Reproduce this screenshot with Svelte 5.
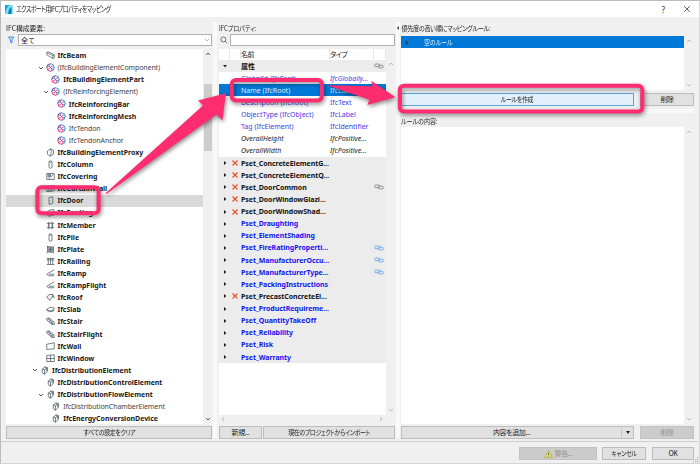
<script>
    const elements = [
        { name: "IfcBeam", icon: "beam", level: 2, bold: true },
        { name: "(IfcBuildingElementComponent)", icon: "part", level: 2, open: true },
        { name: "IfcBuildingElementPart", icon: "part", level: 3, bold: true },
        { name: "(IfcReinforcingElement)", icon: "part", level: 3, open: true },
        { name: "IfcReinforcingBar", icon: "part", level: 4, bold: true },
        { name: "IfcReinforcingMesh", icon: "part", level: 4, bold: true },
        { name: "IfcTendon", icon: "part", level: 4 },
        { name: "IfcTendonAnchor", icon: "part", level: 4 },
        { name: "IfcBuildingElementProxy", icon: "proxy", level: 2, bold: true },
        { name: "IfcColumn", icon: "column", level: 2, bold: true },
        { name: "IfcCovering", icon: "covering", level: 2, bold: true },
        { name: "IfcCurtainWall", icon: "curtain", level: 2, bold: true },
        { name: "IfcDoor", icon: "door", level: 2, bold: true },
        { name: "IfcFooting", icon: "footing", level: 2, bold: true },
        { name: "IfcMember", icon: "member", level: 2, bold: true },
        { name: "IfcPile", icon: "column", level: 2, bold: true },
        { name: "IfcPlate", icon: "plate", level: 2, bold: true },
        { name: "IfcRailing", icon: "railing", level: 2, bold: true },
        { name: "IfcRamp", icon: "ramp", level: 2, bold: true },
        { name: "IfcRampFlight", icon: "ramp", level: 2, bold: true },
        { name: "IfcRoof", icon: "roof", level: 2, bold: true },
        { name: "IfcSlab", icon: "slab", level: 2, bold: true },
        { name: "IfcStair", icon: "stair", level: 2, bold: true },
        { name: "IfcStairFlight", icon: "stair", level: 2, bold: true },
        { name: "IfcWall", icon: "wall", level: 2, bold: true },
        { name: "IfcWindow", icon: "window", level: 2, bold: true },
        { name: "IfcDistributionElement", icon: "flow", level: 1, bold: true, open: true },
        { name: "IfcDistributionControlElement", icon: "flow", level: 2, bold: true },
        { name: "IfcDistributionFlowElement", icon: "flow", level: 2, bold: true, open: true },
        { name: "IfcDistributionChamberElement", icon: "flow", level: 3 },
        { name: "IfcEnergyConversionDevice", icon: "flow", level: 3, bold: true },
    ];

    const icons = {
        beam: "M1 2l2-1 8 4v4l-2 1M1 2v3l8 5V6zM9 6l2-1",
        proxy: "M6 1L2 4v4l3 3 5-3V3zM6 1c2 3 1 7-1 10",
        column: "M4 2l2-1 2 1v8l-2 1-2-1zM4 2l2 1 2-1",
        covering: "M1 2h10v8H1zM2 3h4v3H2M2 4.500h4M6 7l4-4M3 8h3",
        curtain: "M1 3l10-1v7L1 10zM4 3v7M7 2v8M1 6l10-1",
        door: "M4 2l5-1v9l-5 1zM5.500 6v1",
        footing: "M1 6l3-3 6-1 1 3v4l-7 2-3-2zM1 6l4 1 6-2M5 7v3",
        member: "M1 3h10M1 9h10M4 1v10M8 1v10M3.200 3v6M8.800 3v6",
        plate: "M2 2l8 1v7l-8-1zM1 1l2 2M10 2l1-1M2 9l-1 2M10 10l1 1M3 4h6M3 6h6M3 8h6M4 3v6M6 3v6M8 3v6",
        railing: "M1 2h10M1 4h10M3 2v8M6 2v8M9 2v8M1 10h10",
        ramp: "M11 1L1 7l2 2h8M4 7h7",
        roof: "M1 6l3-4h5l2 4-3-1-3 5-1-2zM8 5l1-3",
        slab: "M1 6l4-3 6 1-1 3-5 1zM1 6v1l4 2 5-1V7",
        stair: "M1 2l3-1 7 6v3H8L1 4zM3 2l6 7M2 4l3-2M4 6l3-2M6 8l3-2M7 9l3-2",
        wall: "M1 3l10-2v8L1 10z",
        window: "M1 2l10-1v9H1zM6 1.500V10M1 6h10",
        flow: "M3 4l3-2 3 1v5l-3 3-3-2zM3 4l3 1 3-2M6 5v6M6 1l4 1v5",
    };

    const properties = [
        { name: "属性", group: true, open: true, link: "gray" },
        { name: "GlobalId (IfcRoot)", type: "IfcGlobally...", blue: true, italic: true },
        { name: "Name (IfcRoot)", type: "IfcLabel" },
        { name: "Description (IfcRoot)", type: "IfcText", blue: true },
        { name: "ObjectType (IfcObject)", type: "IfcLabel", blue: true },
        { name: "Tag (IfcElement)", type: "IfcIdentifier", blue: true },
        { name: "OverallHeight", type: "IfcPositive...", italic: true },
        { name: "OverallWidth", type: "IfcPositive...", italic: true },
        { name: "Pset_ConcreteElementG...", group: true, missing: true },
        { name: "Pset_ConcreteElementQ...", group: true, missing: true },
        { name: "Pset_DoorCommon", group: true, missing: true, link: "gray" },
        { name: "Pset_DoorWindowGlazi...", group: true, missing: true },
        { name: "Pset_DoorWindowShad...", group: true, missing: true },
        { name: "Pset_Draughting", group: true, blue: true },
        { name: "Pset_ElementShading", group: true, blue: true },
        { name: "Pset_FireRatingProperti...", group: true, blue: true, link: "blue" },
        { name: "Pset_ManufacturerOccu...", group: true, blue: true, link: "blue" },
        { name: "Pset_ManufacturerType...", group: true, blue: true, link: "blue" },
        { name: "Pset_PackingInstructions", group: true, blue: true },
        { name: "Pset_PrecastConcreteEl...", group: true, missing: true },
        { name: "Pset_ProductRequireme...", group: true, blue: true },
        { name: "Pset_QuantityTakeOff", group: true, blue: true },
        { name: "Pset_Reliability", group: true, blue: true },
        { name: "Pset_Risk", group: true, blue: true },
        { name: "Pset_Warranty", group: true, blue: true },
    ];

    let selectedElement = $state("IfcDoor");
    let selectedProperty = $state("Name (IfcRoot)");
</script>

{#snippet arrow(dir, dim)}
    <svg class="arrow {dir}" class:dim viewBox="0 0 6 6"><path d="M1 4l2-2 2 2" /></svg>
{/snippet}

<div class="dialog">
    <header>
        <svg class="logo" viewBox="0 0 8 9">
            <rect width="8" height="9" fill="#16a9dc" />
            <path d="M0 9C1 4 3 1 5 0h3v9H6V2C4 3 3 6 3 9z" fill="#8ddcf5" />
            <path d="M3.500 9C4 6 5 3 6.500 2V9z" fill="#087fb4" />
        </svg>
        <h1>エクスポート用IFCプロパティをマッピング</h1>
        <span class="help">?</span>
        <svg class="close" viewBox="0 0 8 8"><path d="M1.200 1.200l5.600 5.600M6.800 1.200L1.200 6.800" /></svg>
    </header>

    <main>
        <section class="elements">
            <h2>IFC構成要素:</h2>
            <div class="filter">
                <svg class="funnel" viewBox="0 0 8 8"><path d="M1.500 1h5.200L4.900 4v3L3.500 6.200V4z" /></svg>
                <div class="select"><span>全て</span>{@render arrow("down", true)}</div>
            </div>
            <div class="list">
                <ul class="tree">
                    {#each elements as item}
                        <li
                            class="level{item.level}"
                            class:bold={item.bold}
                            class:selected={selectedElement === item.name}
                        >
                            <span class="toggle">
                                {#if item.open}{@render arrow("down", false)}{/if}
                            </span>
                            {#if item.icon === "part"}
                                <svg class="icon part" viewBox="0 0 12 12">
                                    <path d="M6 1A5 5 0 0 0 1 6" stroke="#4a5aa8" />
                                    <path d="M6 1A5 5 0 0 1 11 6" stroke="#25b9cc" />
                                    <path d="M1 6A5 5 0 0 0 6 11" stroke="#ee3d80" />
                                    <path d="M11 6A5 5 0 0 1 6 11" stroke="#3e9fd0" />
                                    <path d="M6 1c-3 2-1 4 0 5s3 3 0 5" stroke="#ea3d7c" />
                                    <path d="M1 6c2-3 4-1 5 0s3 3 5 0" stroke="#4765b3" />
                                    <path d="M6 6c2-3 3-2 4-2M6 6c-2 3-3 2-4 2" stroke="#e13577" />
                                </svg>
                            {:else}
                                <svg class="icon" viewBox="0 0 12 12"><path d={icons[item.icon]} /></svg>
                            {/if}
                            <span class="name">{item.name}</span>
                        </li>
                    {/each}
                </ul>
                <div class="scroll">
                    {@render arrow("up", false)}
                    <div class="thumb"></div>
                    {@render arrow("down", false)}
                </div>
            </div>
            <button><span class="narrow">すべての設定をクリア</span></button>
        </section>

        <div class="splitter"></div>

        <section class="properties">
            <h2>IFCプロパティ:</h2>
            <div class="filter">
                <svg class="search" viewBox="0 0 8 8"><circle cx="3.400" cy="3.400" r="2.500" /><path d="M5.200 5.200l2 2" /></svg>
                <div class="select"></div>
            </div>
            <div class="list">
                <div class="table">
                    <div class="head">
                        <span></span><span></span><span>名前</span><span>タイプ</span><span></span>
                    </div>
                    {#each properties as prop}
                        <div
                            class="prop"
                            class:group={prop.group}
                            class:blue={prop.blue}
                            class:italic={prop.italic}
                            class:selected={selectedProperty === prop.name}
                        >
                            <span class="expand">
                                {#if prop.group}
                                    <svg class:open={prop.open} viewBox="0 0 4 4"><path d="M1 0l2.400 2L1 4z" /></svg>
                                {/if}
                            </span>
                            <span class="mark">
                                {#if prop.missing}
                                    <svg viewBox="0 0 6 6"><path d="M.5.5l5 5M5.500.5l-5 5" /></svg>
                                {/if}
                            </span>
                            <span class="name">{prop.name}</span>
                            <span class="type">{prop.type ?? ""}</span>
                            {#if prop.link}
                                <svg class="link {prop.link}" viewBox="0 0 10 6">
                                    <rect x=".7" y="1" width="5" height="2.700" rx="1.200" />
                                    <rect x="4.300" y="2.200" width="5" height="2.700" rx="1.200" />
                                </svg>
                            {/if}
                        </div>
                    {/each}
                </div>
                <div class="scroll">{@render arrow("up", true)}{@render arrow("down", true)}</div>
            </div>
            <div class="hscroll">{@render arrow("left", true)}{@render arrow("right", true)}</div>
            <div class="buttons">
                <button class="new">新規...</button>
                <button class="import"><span class="narrow">現在のプロジェクトからインポート</span></button>
            </div>
        </section>

        <div class="splitter"></div>

        <section class="rules">
            <h2><i></i>優先度の高い順にマッピングルール:</h2>
            <div class="list rule-list">
                <div class="box">
                    <div class="rule">
                        <svg viewBox="0 0 4 6"><path d="M0 2.500L2 .5l2 2zM0 3.500l2 2 2-2z" /></svg>
                        <span class="narrow">空のルール</span>
                    </div>
                </div>
                <div class="scroll">{@render arrow("up", true)}{@render arrow("down", true)}</div>
            </div>
            <div class="buttons">
                <button class="create"><span class="narrow">ルールを作成</span></button>
                <button class="delete">削除</button>
            </div>
            <div class="divider"></div>
            <h3>ルールの内容:</h3>
            <div class="list content-list">
                <div class="box"></div>
                <div class="scroll">{@render arrow("up", true)}{@render arrow("down", true)}</div>
            </div>
            <div class="buttons">
                <button class="add"><span>内容を追加...</span><i></i></button>
                <button class="delete" disabled>削除</button>
            </div>
        </section>
    </main>

    <footer>
        <button class="warn" disabled>
            <svg viewBox="0 0 9 8"><path d="M4.500.5l4 7h-8z" fill="#e6df55" stroke="#a6a04c" stroke-width=".6" /><path d="M4.500 2.800v2.400M4.500 6v.7" stroke="#555" stroke-width=".8" /></svg>
            警告...
        </button>
        <button class="cancel"><span class="narrow">キャンセル</span></button>
        <button class="ok">OK</button>
    </footer>

    <svg class="grip" viewBox="0 0 6 6"><path d="M4 0h1.300v1.300H4zM2 2h1.300v1.300H2zM4 2h1.300v1.300H4zM0 4h1.300v1.300H0zM2 4h1.300v1.300H2zM4 4h1.300v1.300H4z" /></svg>

    <!-- callouts that lead from the element to the rule button -->
    <svg class="callouts" viewBox="0 0 700 464">
        <rect x="37.400" y="187.200" width="61.200" height="26.100" rx="4" />
        <rect x="231.800" y="80" width="90" height="20.500" rx="4" />
        <rect x="399.800" y="85.700" width="242.500" height="25.800" rx="4" />
        <path d="M105.500 193.300L203 105.500L198 100.500L226 93.300L222.300 120.500L216.500 114.500L106.500 194z" />
        <path d="M327 85.200L372.500 86.200L371.300 80.800L395.500 97.300L367.300 105L369.300 99.700z" />
    </svg>
</div>

<style>
    :global(body) {
        background: #f0f0f0;
    }

    .dialog {
        position: relative;
        box-sizing: border-box;
        width: 700px;
        height: 464px;
        display: flex;
        flex-direction: column;
        overflow: hidden;
        background: #f0f0f0;
        border: 1px solid #bcbcbc;
        border-right-color: #d8d8d8;
        border-bottom-color: #d5d5d5;
        font-family: "Noto Sans", "Noto Sans CJK JP", sans-serif;
        font-size: 7px;
        color: #222;
    }

    svg {
        display: block;
        flex: none;
        fill: none;
    }

    header {
        height: 16px;
        flex: none;
        display: flex;
        align-items: center;
        padding: 0 8px 0 4px;
        background: #fff;
    }

    .logo {
        width: 8px;
        height: 9px;
        margin-right: 3px;
    }

    h1,
    h2,
    h3 {
        margin: 0;
        font-family: "Noto Sans CJK JP", sans-serif;
        font-weight: 400;
        font-size: 7px;
        line-height: 12px;
        white-space: nowrap;
        font-feature-settings: "palt";
        transform-origin: left;
    }

    h1 {
        letter-spacing: -0.7px;
        font-size: 7.5px;
        transform: scaleX(0.8);
    }

    .narrow {
        display: inline-block;
        transform: scaleX(0.85);
    }

    .help {
        margin-left: auto;
        margin-right: 18px;
        font-size: 8px;
    }

    .close {
        width: 8px;
        height: 8px;
        stroke: #333;
        stroke-width: 0.8;
    }

    main {
        height: 424px;
        flex: none;
        display: flex;
    }

    section {
        display: flex;
        flex-direction: column;
        padding-top: 5px;
    }

    .elements {
        width: 206px;
        margin-left: 5px;
    }

    .elements h2 {
        transform: scaleX(0.97);
    }

    .properties {
        width: 176px;
        margin-left: 2px;
    }

    .properties h2 {
        transform: scaleX(0.86);
    }

    .rules {
        width: 293px;
        margin-left: 1px;
    }

    .splitter {
        width: 4px;
        margin: 5px 0 3px 1px;
        background: #f9f9f9;
    }

    .filter {
        display: flex;
        align-items: center;
        height: 12px;
        margin-bottom: 3px;
    }

    .funnel {
        width: 8px;
        height: 8px;
        margin: 0 3px 0 1px;
        stroke: #2f82e8;
        stroke-width: 0.9;
        fill: #d7e9ff;
    }

    .search {
        width: 8px;
        height: 8px;
        margin: 0 2px 0 1px;
        stroke: #555;
        stroke-width: 0.8;
    }

    .select {
        flex: 1;
        height: 12px;
        box-sizing: border-box;
        display: flex;
        align-items: center;
        justify-content: space-between;
        padding: 0 1px 0 2px;
        background: #fff;
        border: 1px solid #b0b0b0;
    }

    .arrow {
        width: 6px;
        height: 6px;
        stroke: #444;
        stroke-width: 0.9;
    }

    .arrow.dim {
        stroke: #aaa;
        stroke-width: 0.8;
    }

    .arrow.down {
        transform: rotate(180deg);
    }

    .arrow.left {
        transform: rotate(-90deg);
    }

    .arrow.right {
        transform: rotate(90deg);
    }

    .list {
        display: flex;
    }

    .elements .list {
        height: 375px;
        margin-bottom: 2px;
    }

    .tree {
        flex: 1;
        margin: 0;
        padding: 0.500px 0 0;
        box-sizing: border-box;
        overflow: hidden;
        list-style: none;
        background: #fff;
    }

    li {
        display: flex;
        align-items: center;
        height: 12.120px;
        font-size: 7px;
        letter-spacing: -0.1px;
        color: #444;
    }

    li.bold {
        font-weight: 700;
        letter-spacing: -0.03px;
        color: #1a1a1a;
    }

    li.selected {
        background: #d9d9d9;
    }

    .level1 {
        padding-left: 26px;
    }

    .level2 {
        padding-left: 31.500px;
    }

    .level3 {
        padding-left: 37.200px;
    }

    .level4 {
        padding-left: 42.800px;
    }

    .toggle {
        width: 8px;
    }

    .icon {
        width: 9px;
        height: 9px;
        margin-right: 3px;
        stroke: #4a5961;
        stroke-width: 1;
    }

    .icon.part {
        stroke-width: 1.300;
    }

    li .name {
        padding-top: 1px;
    }

    .name,
    .type {
        line-height: 12px;
        white-space: nowrap;
    }

    .scroll {
        width: 9px;
        flex: none;
        display: flex;
        flex-direction: column;
        align-items: center;
        justify-content: space-between;
        padding: 2px 0;
        box-sizing: border-box;
    }

    .thumb {
        width: 8px;
        height: 67px;
        margin: 27px 0 auto;
        background: #cdcdcd;
    }

    button {
        box-sizing: border-box;
        height: 13px;
        flex: none;
        padding: 0;
        display: flex;
        align-items: center;
        justify-content: center;
        border: 1px solid #bcbcbc;
        border-radius: 0;
        background: #e1e1e1;
        color: #222;
        font-family: "Noto Sans CJK JP", sans-serif;
        font-size: 7px;
        line-height: 11px;
        font-feature-settings: "palt";
        letter-spacing: -0.4px;
        white-space: nowrap;
    }

    button:disabled {
        background: #cccccc;
        border-color: #c2c2c2;
        color: #929292;
    }

    .properties .list {
        height: 366px;
    }

    .table {
        width: 167px;
        background: #fff;
    }

    .head,
    .prop {
        display: grid;
        grid-template-columns: 11px 11px 89px 44px 12px;
        align-items: center;
        height: 12.125px;
    }

    .head {
        height: 10.500px;
        font-family: "Noto Sans CJK JP", sans-serif;
    }

    .head span {
        height: 10px;
        line-height: 10px;
        box-sizing: border-box;
        border-right: 1px solid #e5e5e5;
        font-feature-settings: "palt";
        letter-spacing: -0.4px;
    }

    .prop .name,
    .prop .type {
        padding-top: 1px;
    }

    .prop.group {
        background: #ececec;
        font-weight: 700;
        color: #111;
        letter-spacing: -0.05px;
    }

    .prop.blue {
        color: #3b3bea;
    }

    .prop.group.blue {
        color: #1414f0;
    }

    .prop.italic {
        font-style: italic;
    }

    .prop.selected {
        background: #0078d7;
        color: #dcefff;
    }

    .expand svg {
        width: 4px;
        height: 4px;
        margin-left: 4px;
        fill: #222;
    }

    .expand .open {
        transform: rotate(90deg);
    }

    .mark svg {
        width: 6px;
        height: 6px;
        margin-left: 2px;
        stroke: #f04a23;
        stroke-width: 1.100;
    }

    .link {
        width: 10px;
        height: 6px;
        stroke-width: 0.8;
    }

    .link.gray {
        stroke: #777f85;
    }

    .link.blue {
        stroke: #5ca2ec;
    }

    .properties .scroll {
        padding: 12px 0 2px;
    }

    .hscroll {
        width: 167px;
        height: 8px;
        display: flex;
        align-items: center;
        justify-content: space-between;
        padding: 0 2px 0 1px;
        box-sizing: border-box;
    }

    .hscroll + .buttons {
        margin-top: 3px;
    }

    .buttons {
        display: flex;
        justify-content: space-between;
    }

    .new {
        width: 43px;
    }

    .import {
        width: 132px;
    }

    .rules h2 {
        display: flex;
        align-items: center;
        letter-spacing: -0.4px;
        margin-left: -4px;
        transform: scaleX(0.88);
    }

    .rules h2 i {
        border: 2px solid transparent;
        border-right-color: #222;
        border-left: 0;
        margin-right: 3px;
    }

    .rules h3 {
        transform: scaleX(0.86);
    }

    .box {
        width: 283px;
        background: #fff;
    }

    .rule-list {
        height: 54px;
        margin: 2px 0 3px;
    }

    .rule {
        display: flex;
        align-items: center;
        height: 12px;
        padding-left: 4px;
        background: #0078d7;
        color: #e6f3ff;
        font-family: "Noto Sans CJK JP", sans-serif;
        font-feature-settings: "palt";
    }

    .rule svg {
        width: 3px;
        height: 5px;
        margin-right: 16px;
        fill: #07192b;
    }

    .rule .narrow {
        transform-origin: left;
    }

    .create {
        width: 233px;
        background: #e1f0fa;
        border-color: #5ba5dc;
    }

    .delete {
        width: 54px;
    }

    .divider {
        height: 4px;
        margin: 3px 0 2px;
        background: #f8f8f8;
    }

    .content-list {
        height: 297px;
        margin-bottom: 2px;
    }

    .add {
        width: 233px;
    }

    .add span {
        flex: 1;
    }

    .add i {
        width: 11px;
        height: 11px;
        display: flex;
        align-items: center;
        justify-content: center;
        border-left: 1px solid #c8c8c8;
    }

    .add i::after {
        content: "";
        border: 2px solid transparent;
        border-top: 3px solid #222;
        border-bottom: 0;
    }

    footer {
        display: flex;
        justify-content: flex-end;
        padding: 5px 4px 0 0;
        margin-right: 1px;
        flex: 1;
        border-top: 1px solid #cfcfcf;
    }

    .warn {
        width: 78px;
        margin-right: 5px;
    }

    .warn svg {
        width: 9px;
        height: 8px;
        margin-right: 2px;
    }

    .cancel {
        width: 44px;
        margin-right: 6px;
    }

    .ok {
        width: 42px;
    }

    .grip {
        position: absolute;
        right: 0;
        bottom: 0;
        width: 6px;
        height: 6px;
        fill: #bbb;
    }

    .callouts {
        position: absolute;
        top: -1px;
        left: -1px;
        width: 700px;
        height: 464px;
        pointer-events: none;
        filter: drop-shadow(1px 2px 2px rgba(0, 0, 0, 0.45));
    }

    .callouts rect {
        stroke: #ff2d70;
        stroke-width: 4;
    }

    .callouts path {
        fill: #ff2d70;
    }
</style>
